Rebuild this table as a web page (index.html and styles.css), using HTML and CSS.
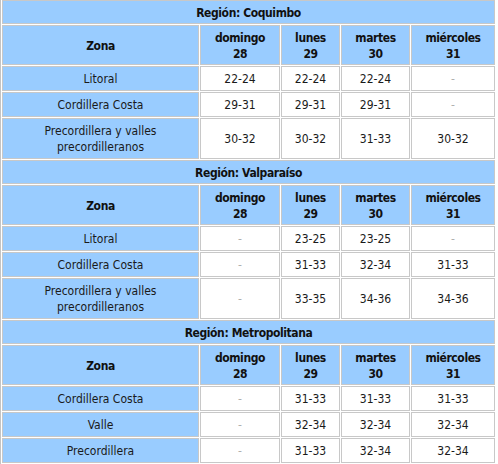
FILE: index.html
```html
<!DOCTYPE html>
<html lang="es">
<head>
<meta charset="utf-8">
<title>Temperaturas</title>
<link rel="stylesheet" href="styles.css">
</head>
<body>
<table class="temps">
  <colgroup>
    <col class="c-zona"><col class="c-dom"><col class="c-lun"><col class="c-mar"><col class="c-mie">
  </colgroup>
  <tbody>
    <tr><th colspan="5" class="region">Región: Coquimbo</th></tr>
    <tr><th>Zona</th><th>domingo<br>28</th><th>lunes<br>29</th><th>martes<br>30</th><th>miércoles<br>31</th></tr>
    <tr><td class="zona">Litoral</td><td>22-24</td><td>22-24</td><td>22-24</td><td class="na">-</td></tr>
    <tr><td class="zona">Cordillera Costa</td><td>29-31</td><td>29-31</td><td>29-31</td><td class="na">-</td></tr>
    <tr><td class="zona">Precordillera y valles<br>precordilleranos</td><td>30-32</td><td>30-32</td><td>31-33</td><td>30-32</td></tr>
  </tbody>
  <tbody>
    <tr><th colspan="5" class="region">Región: Valparaíso</th></tr>
    <tr><th>Zona</th><th>domingo<br>28</th><th>lunes<br>29</th><th>martes<br>30</th><th>miércoles<br>31</th></tr>
    <tr><td class="zona">Litoral</td><td class="na">-</td><td>23-25</td><td>23-25</td><td class="na">-</td></tr>
    <tr><td class="zona">Cordillera Costa</td><td class="na">-</td><td>31-33</td><td>32-34</td><td>31-33</td></tr>
    <tr><td class="zona">Precordillera y valles<br>precordilleranos</td><td class="na">-</td><td>33-35</td><td>34-36</td><td>34-36</td></tr>
  </tbody>
  <tbody>
    <tr><th colspan="5" class="region">Región: Metropolitana</th></tr>
    <tr><th>Zona</th><th>domingo<br>28</th><th>lunes<br>29</th><th>martes<br>30</th><th>miércoles<br>31</th></tr>
    <tr><td class="zona">Cordillera Costa</td><td class="na">-</td><td>31-33</td><td>31-33</td><td>31-33</td></tr>
    <tr><td class="zona">Valle</td><td class="na">-</td><td>32-34</td><td>32-34</td><td>32-34</td></tr>
    <tr><td class="zona">Precordillera</td><td class="na">-</td><td>31-33</td><td>32-34</td><td>32-34</td></tr>
  </tbody>
</table>
</body>
</html>
```
FILE: styles.css
```css
html, body {
  margin: 0;
  padding: 0;
  background: #ffffff;
}

body {
  font-family: "DejaVu Sans Condensed", "Liberation Sans", sans-serif;
  font-size: 12px;
  line-height: 16px;
  color: #1a1a1a;
}

.temps {
  border-collapse: separate;
  border-spacing: 1px;
  margin: -1px 0 0 0;
  border-left: 1px solid #c4c4c4;
  width: 496px;
  table-layout: fixed;
}

.c-zona { width: 197px; }
.c-dom { width: 80px; }
.c-lun { width: 59px; }
.c-mar { width: 69px; }
.c-mie { width: 84px; }

.temps th,
.temps td {
  border: 1px solid #c8c8c8;
  text-align: center;
  vertical-align: middle;
}

.temps th {
  background: #99ccff;
  font-weight: bold;
  color: #111;
  letter-spacing: -0.4px;
  padding: 4px 3px 2px;
}

.temps th.region {
  padding: 4px 3px 2px;
}

.temps td {
  background: #ffffff;
  padding: 4px 3px 3px;
}

.temps td.zona {
  background: #99ccff;
}

.temps td.na {
  color: #b0b0b0;
}
```
